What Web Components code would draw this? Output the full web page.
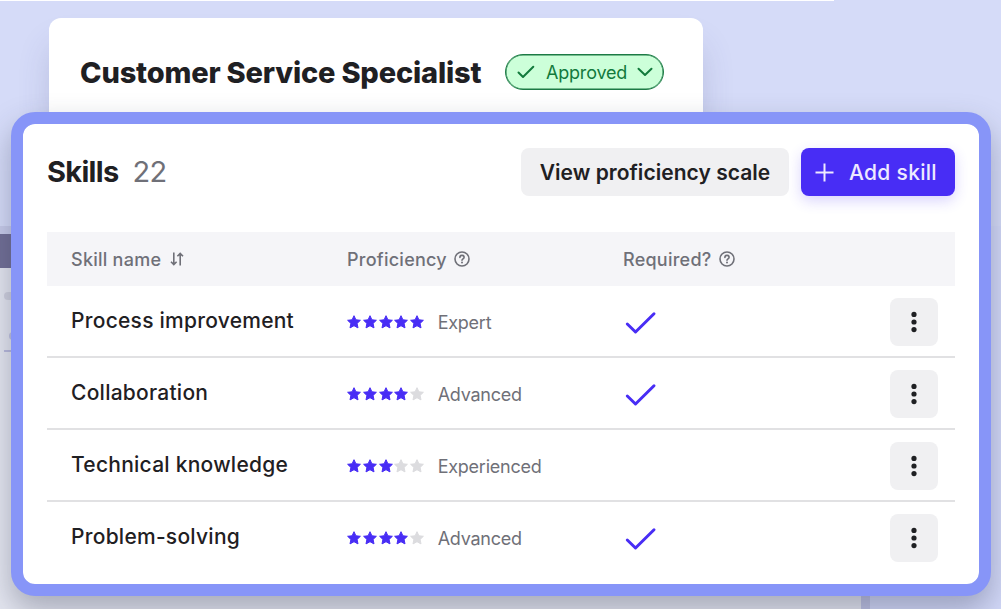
<!DOCTYPE html>
<html lang="en">
<head>
<meta charset="utf-8">
<title>Customer Service Specialist</title>
<style>
  html, body { margin: 0; height: 100%; }
  body {
    --ink: #1f2023;
    --muted: #6f7078;
    --accent: #482df5;
    --frame: #8795f8;
    --grey: #f0f0f2;
    font-family: Inter, "Liberation Sans", sans-serif;
    color: var(--ink);
    overflow: hidden;
  }
</style>
</head>
<body>
<skills-stage>
  <app-backdrop slot="back"></app-backdrop>
  <job-card>
    Customer Service Specialist
    <status-pill slot="status">Approved</status-pill>
  </job-card>
  <skills-panel count="22">
    <span slot="title">Skills</span>
    <app-button slot="actions">View proficiency scale</app-button>
    <app-button slot="actions" primary>Add skill</app-button>
    <skill-row level="5" label="Expert" required>Process improvement</skill-row>
    <skill-row level="4" label="Advanced" required>Collaboration</skill-row>
    <skill-row level="3" label="Experienced">Technical knowledge</skill-row>
    <skill-row level="4" label="Advanced" required>Problem-solving</skill-row>
  </skills-panel>
</skills-stage>

<script>
const define = (name, html, setup) => {
  const template = document.createElement("template")
  template.innerHTML = html
  customElements.define(name, class extends HTMLElement {
    constructor() {
      super()
      this.attachShadow({ mode: "open" })
      this.shadowRoot.appendChild(template.content.cloneNode(true))
    }
    connectedCallback() {
      if (setup) setup(this, this.shadowRoot)
    }
  })
}

define("skills-stage", `
<style>
:host {
  display: grid;
  width: 1001px;
  height: 609px;
  overflow: hidden;
  background: #d5dbf8;
}
::slotted([slot="back"]), .front {
  grid-area: 1 / 1;
  min-height: 0;
}
.front {
  display: flex;
  flex-direction: column;
  align-items: flex-start;
  padding: 18px 10px 0 11px;
}
</style>
<slot name="back"></slot>
<div class="front"><slot></slot></div>
`)

define("app-backdrop", `
<style>
:host {
  display: grid;
  grid-template-columns: 861px 9px 1fr;
  grid-template-rows: 1px 225px 1fr;
}
.edge { background: #fff; width: 834px; grid-column: 1 / 4; }
.gap { grid-column: 1 / 4; }
.page { background: #e4e6f0; }
.line { background: #bfc2e4; }
.rest { background: #d2d8f8; }
.tint { height: 8px; background: #c7cbea; }
.bar { height: 34px; background: #706e95; }
.dot { width: 14px; height: 8px; border-radius: 4px; background: #cfd0de; margin: 24px 0 0 4px; }
.dot.low { margin: 32px 0 0 9px; background: #c0c2e0; }
.rule { width: 14px; height: 2px; margin: 10px 0 0 4px; background: #b8b9dc; }
</style>
<div class="edge"></div>
<div class="gap"></div>
<div class="page">
  <div class="tint"></div>
  <div class="bar"></div>
  <div class="dot"></div>
  <div class="dot low"></div>
  <div class="rule"></div>
</div>
<div class="line"></div>
<div class="rest"></div>
`)

define("job-card", `
<style>
:host {
  display: flex;
  align-items: flex-start;
  box-sizing: border-box;
  flex: none;
  width: 654px;
  height: 94px;
  margin-left: 38px;
  padding: 36px 0 0 31px;
  background: #fff;
  border-radius: 12px 12px 0 0;
  box-shadow: 0 26px 34px -4px rgba(70, 75, 130, .24);
}
h1 {
  width: 425px;
  margin: 0;
  font-size: 29px;
  line-height: 37px;
  font-weight: 800;
  letter-spacing: -.18px;
  white-space: nowrap;
}
</style>
<h1><slot></slot></h1>
<slot name="status"></slot>
`)

define("status-pill", `
<style>
:host {
  display: flex;
  align-items: center;
  box-sizing: border-box;
  width: 159px;
  height: 36px;
  padding: 0 10px 0 11px;
  border: 1px solid #1c7a45;
  border-radius: 18px;
  box-shadow: inset 0 0 0 .5px #1c7a45;
  background: #ccffd9;
  color: #127a3c;
  font-size: 18px;
}
.text { flex: 1; padding-left: 11px; letter-spacing: -.2px; }
svg { fill: none; stroke: currentColor; stroke-width: 2; stroke-linecap: round; stroke-linejoin: round; }
</style>
<svg width="18" height="14" viewBox="0 0 18 14"><path d="M1.5 7.5l4.5 4.5L16.3 1.8"/></svg>
<span class="text"><slot></slot></span>
<svg width="16" height="10" viewBox="0 0 16 10"><path d="M1.5 1.7L8 8l6.5-6.3"/></svg>
`)

define("app-button", `
<style>
:host {
  display: flex;
  align-items: center;
  justify-content: center;
  box-sizing: border-box;
  width: 268px;
  height: 48px;
  border-radius: 8px;
  background: var(--grey);
  font-size: 21px;
  font-weight: 600;
  letter-spacing: .04px;
  white-space: nowrap;
}
:host([primary]) {
  width: 154px;
  gap: 15px;
  padding-right: 4px;
  background: var(--accent);
  color: #eeeaff;
  font-weight: 500;
  letter-spacing: .3px;
  box-shadow: 0 5px 14px rgba(72, 45, 245, .2);
}
svg { display: none; }
:host([primary]) svg { display: block; }
</style>
<svg width="19" height="19" viewBox="0 0 19 19"><path d="M9.5 .5v18M.5 9.5h18" stroke="currentColor" stroke-width="2"/></svg>
<slot></slot>
`)

define("help-icon", `
<style>:host { display: flex; }</style>
<svg width="16" height="16" viewBox="0 0 16 16" fill="none" stroke="currentColor" stroke-width="1.6" stroke-linecap="round">
  <circle cx="8" cy="8" r="7"/>
  <path d="M5.9 6.4c0-1.2.9-2 2.1-2s2.1.8 2.1 1.9c0 1.5-2.1 1.5-2.1 2.9"/>
  <circle cx="8" cy="11.6" r="1" fill="currentColor" stroke="none"/>
</svg>
`)

define("skills-panel", `
<style>
:host {
  display: block;
  box-sizing: border-box;
  flex: none;
  position: relative;
  width: 980px;
  height: 484px;
  padding: 24px;
  border: 12px solid var(--frame);
  border-radius: 24px;
  background: #fff;
  background-clip: padding-box;
  box-shadow: 0 14px 30px rgba(50, 55, 80, .34);
}
header { display: flex; gap: 12px; height: 48px; }
h2 {
  flex: 1;
  display: flex;
  gap: 14px;
  margin: 0;
  font-size: 29px;
  line-height: 48px;
  font-weight: 700;
  letter-spacing: -.7px;
}
.count { font-weight: 400; letter-spacing: -.5px; color: var(--muted); }
.head {
  display: grid;
  grid-template-columns: 276px 276px 1fr;
  height: 54px;
  margin-top: 36px;
  padding-left: 24px;
  background: #f5f5f8;
  color: var(--muted);
  font-size: 18px;
  font-weight: 500;
  letter-spacing: .25px;
}
.head div { display: flex; align-items: center; gap: 7.5px; }
</style>
<header>
  <h2><slot name="title"></slot><span class="count"></span></h2>
  <slot name="actions"></slot>
</header>
<div class="head">
  <div>Skill name
    <svg width="16" height="16" viewBox="0 0 16 16" fill="none" stroke="currentColor" stroke-width="1.6">
      <path d="M4.8 1.5v12M2 10.8l2.8 2.8 2.8-2.8M11.2 14.5v-12M8.4 5.2l2.8-2.8L14 5.2"/>
    </svg>
  </div>
  <div>Proficiency <help-icon></help-icon></div>
  <div>Required? <help-icon></help-icon></div>
</div>
<slot></slot>
`, (el, root) => {
  root.querySelector(".count").textContent = el.getAttribute("count")
})

const star = on => `<svg class="${on ? "on" : ""}" viewBox="0 0 14 14"><path d="M7 .7l1.9 4.1 4.5.5-3.3 3.1.9 4.5L7 10.7l-4 2.2.9-4.5L.6 5.3l4.5-.5z"/></svg>`

define("star-rating", `
<style>
:host { display: block; }
.stars { display: flex; gap: 1.8px; }
svg { width: 14px; height: 14px; fill: #dcdcdf; stroke: #dcdcdf; stroke-width: 1; stroke-linejoin: round; overflow: visible; }
svg.on { fill: var(--accent); stroke: var(--accent); }
</style>
<div class="stars"></div>
`, (el, root) => {
  const value = Number(el.getAttribute("value"))
  root.querySelector(".stars").innerHTML = [1, 2, 3, 4, 5].map(n => star(n <= value)).join("")
})

define("skill-row", `
<style>
:host {
  display: grid;
  grid-template-columns: 276px 276px 1fr 48px;
  align-items: start;
  box-sizing: border-box;
  height: 72px;
  padding: 12px 17px 0 24px;
  border-bottom: 2px solid #e1e1e3;
}
:host(:last-child) { border-bottom: 0; }
.name {
  font-size: 21px;
  font-weight: 500;
  line-height: 45px;
  letter-spacing: .25px;
}
.level { display: flex; align-items: center; gap: 13.5px; height: 48px; color: var(--muted); font-size: 18px; letter-spacing: -.25px; }
.check { display: flex; align-items: center; height: 50px; padding-left: 2px; }
:host(:not([required])) .check svg { display: none; }
.menu { display: flex; align-items: center; justify-content: center; height: 48px; border-radius: 8px; background: var(--grey); }
</style>
<div class="name"><slot></slot></div>
<div class="level"></div>
<div class="check">
  <svg width="32" height="24" viewBox="0 0 32 24" fill="none" stroke="var(--accent)" stroke-width="3" stroke-linecap="round" stroke-linejoin="round"><path d="M2.3 13l8.2 8L29 2.8"/></svg>
</div>
<div class="menu">
  <svg width="6" height="22" viewBox="0 0 6 22" fill="#1f2023"><circle cx="3" cy="3.4" r="2.6"/><circle cx="3" cy="11" r="2.6"/><circle cx="3" cy="18.6" r="2.6"/></svg>
</div>
`, (el, root) => {
  root.querySelector(".level").innerHTML =
    `<star-rating value="${el.getAttribute("level")}"></star-rating><span>${el.getAttribute("label")}</span>`
})
</script>
</body>
</html>
